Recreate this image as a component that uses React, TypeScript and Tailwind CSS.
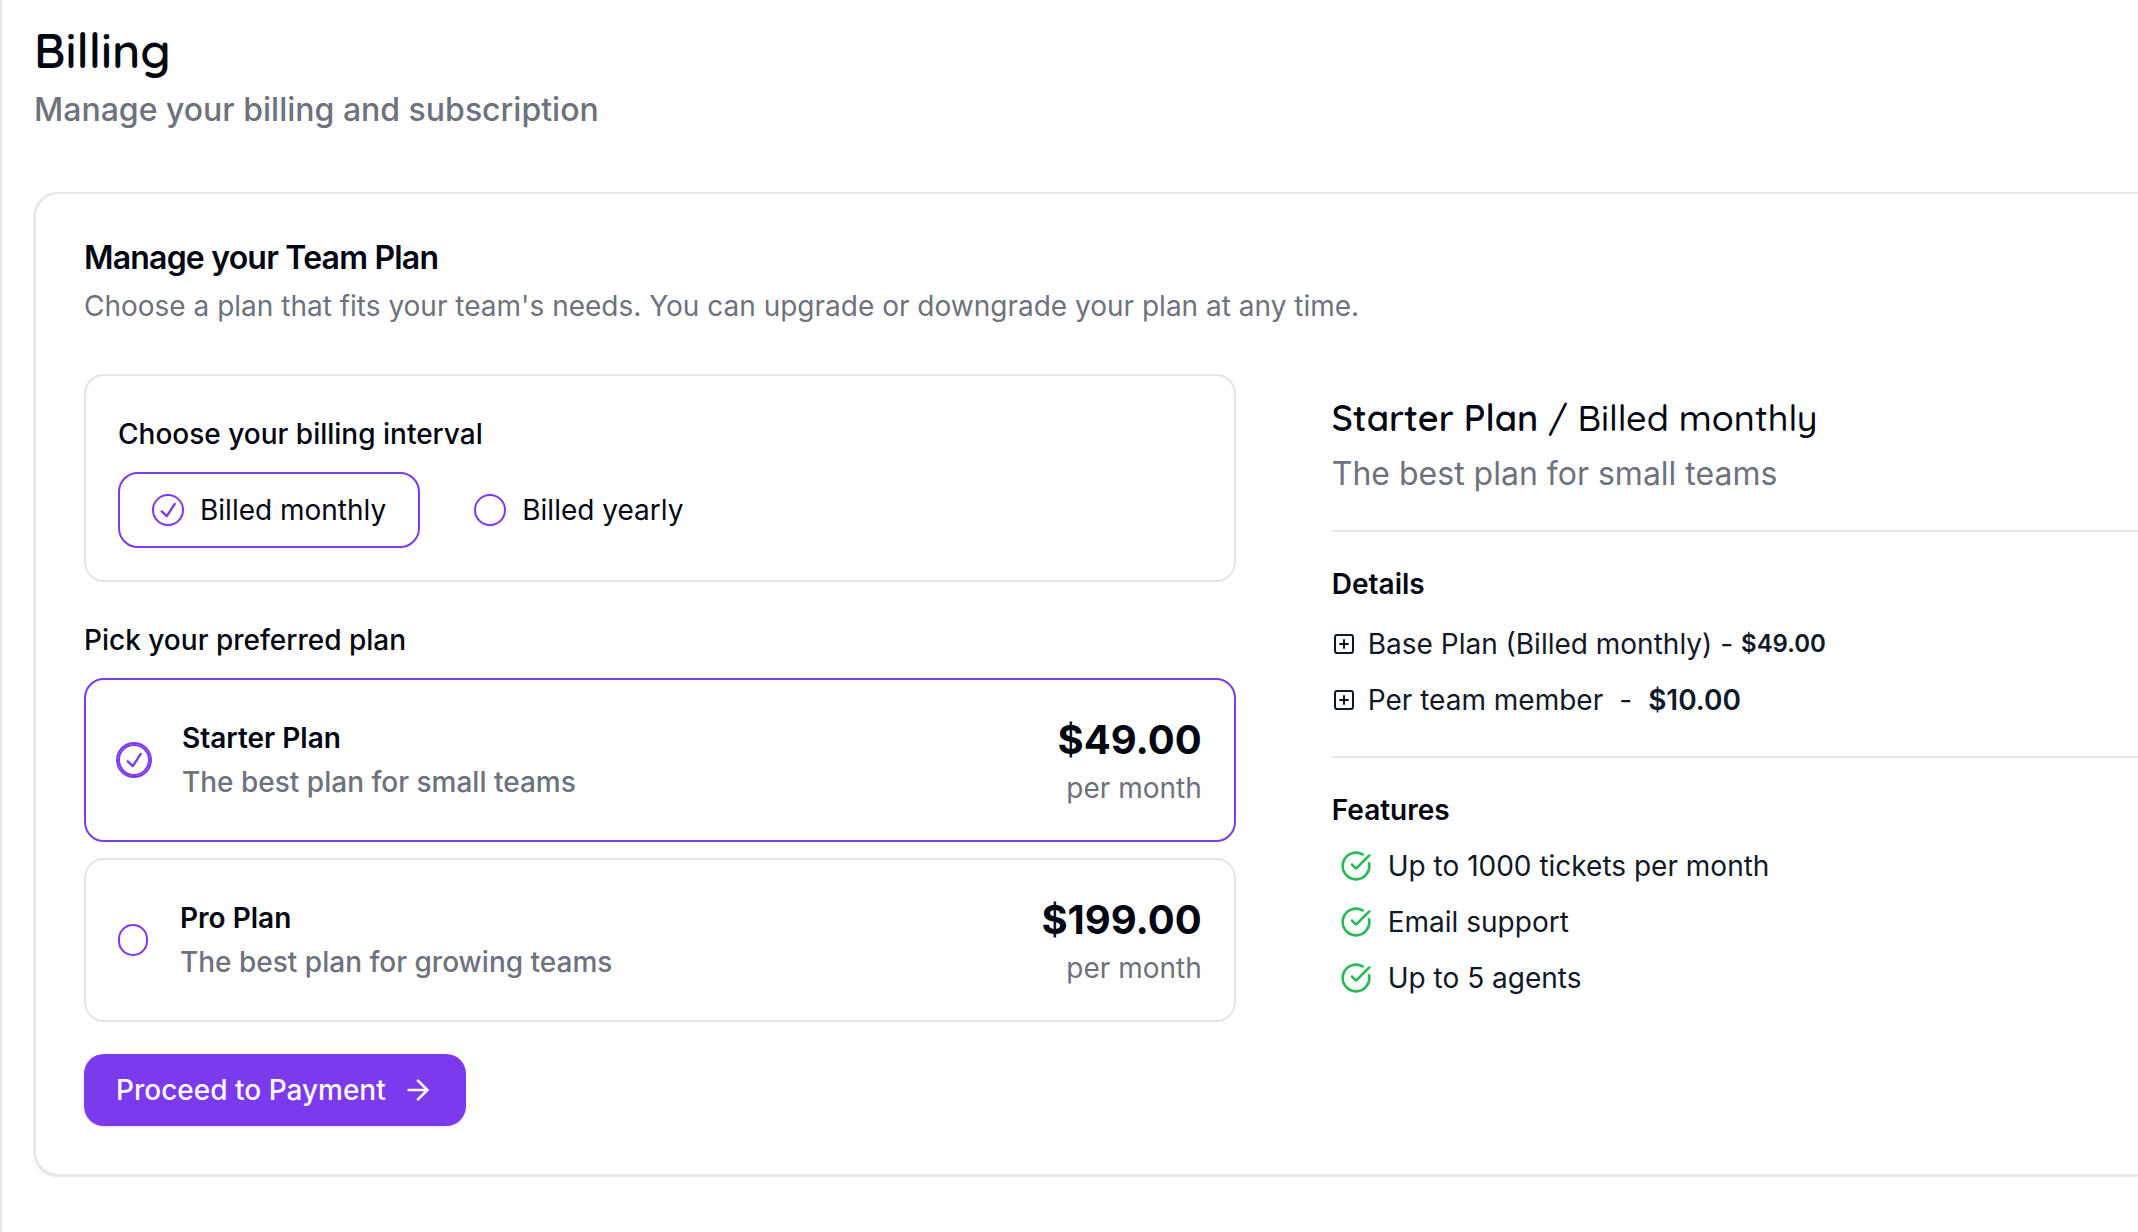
import { ArrowRight, CircleCheckBig, SquarePlus } from "lucide-react";
import { RxCheck } from "react-icons/rx";
import clsx from "clsx";
import { useState } from "react";

type Interval = "month" | "year";

const intervals: { id: Interval; label: string }[] = [
    { id: "month", label: "Billed monthly" },
    { id: "year", label: "Billed yearly" },
];

const plans = [
    {
        id: "starter",
        name: "Starter Plan",
        description: "The best plan for small teams",
        price: { month: "$49.00", year: "$490.00" },
        perMember: "$10.00",
        features: ["Up to 1000 tickets per month", "Email support", "Up to 5 agents"],
    },
    {
        id: "pro",
        name: "Pro Plan",
        description: "The best plan for growing teams",
        price: { month: "$199.00", year: "$1990.00" },
        perMember: "$10.00",
        features: ["Unlimited tickets", "Priority support", "Up to 20 agents"],
    },
];

interface RadioProps {
    name: string;
    value: string;
    checked: boolean;
    ring?: boolean;
    onChange: () => void;
}

function Radio({ name, value, checked, ring, onChange }: RadioProps) {
    return (
        <span className={clsx("relative flex h-8 items-center justify-center", ring && !checked ? "w-[30px]" : "w-8")}>
            <input
                type="radio"
                name={name}
                value={value}
                checked={checked}
                onChange={onChange}
                className={clsx(
                    "h-full w-full appearance-none rounded-full border-2 border-[#7c3aed] shadow-sm",
                    ring && checked && "ring-2 ring-[#7c3aed]",
                )}
            />
            {checked && <RxCheck className="pointer-events-none absolute h-7 w-7 text-[#7c3aed]" />}
        </span>
    );
}

export default function App() {
    const [interval, setBillingInterval] = useState<Interval>("month");
    const [planId, setPlanId] = useState("starter");

    const plan = plans.find((p) => p.id === planId) ?? plans[0];
    const intervalLabel = intervals.find((i) => i.id === interval)?.label;

    return (
        <main className="min-h-screen overflow-hidden border-l-2 border-[#e5e5e5] bg-white pt-5.5 pl-8 font-['Inter',sans-serif] text-[28px] leading-10 text-[#030712]">
            <h1 className="font-['Quicksand','Inter',sans-serif] text-5xl leading-14 font-semibold">Billing</h1>
            <p className="mt-2.5 text-[32px] leading-11 font-medium text-[#6e727c]">Manage your billing and subscription</p>

            <section className="mt-15 rounded-l-3xl border-2 border-r-0 border-[#e5e5e5] py-12 pl-12 shadow-sm">
                <h2 className="text-[32px] leading-8 font-semibold tracking-tight">Manage your Team Plan</h2>
                <p className="mt-3 text-[#6e727c]">Choose a plan that fits your team's needs. You can upgrade or downgrade your plan at any time.</p>

                <div className="mt-12 grid grid-cols-[10fr_7fr] gap-24">
                    <form onSubmit={(e) => e.preventDefault()}>
                        <fieldset className="rounded-[20px] border-2 border-[#e5e5e5] p-8">
                            <div className="pt-1 leading-11 font-medium">Choose your billing interval</div>
                            <div className="mt-4 flex gap-5">
                                {intervals.map((item) => (
                                    <label
                                        key={item.id}
                                        className={clsx(
                                            "flex items-center gap-4 rounded-[20px] border-2 px-8 py-4",
                                            item.id === interval ? "border-[#7c3aed]" : "border-transparent",
                                        )}
                                    >
                                        <Radio
                                            name="interval"
                                            value={item.id}
                                            checked={item.id === interval}
                                            onChange={() => setBillingInterval(item.id)}
                                        />
                                        {item.label}
                                    </label>
                                ))}
                            </div>
                        </fieldset>

                        <div className="mt-9.5 font-medium">Pick your preferred plan</div>
                        <div className="mt-4.5 space-y-4">
                            {plans.map((item) => (
                                <label
                                    key={item.id}
                                    className={clsx(
                                        "flex h-41 items-center gap-8 rounded-[20px] border-2 px-8",
                                        item.id === planId ? "border-[#7c3aed]" : "border-[#e5e5e5]",
                                    )}
                                >
                                    <Radio
                                        ring
                                        name="plan"
                                        value={item.id}
                                        checked={item.id === planId}
                                        onChange={() => setPlanId(item.id)}
                                    />
                                    <span className="flex flex-1 flex-col leading-11">
                                        <span className="font-semibold">{item.name}</span>
                                        <span className="font-medium text-[#6e727c]">{item.description}</span>
                                    </span>
                                    <span className="flex flex-col pt-2 text-right leading-12">
                                        <span className="text-[40px] font-bold">{item.price[interval]}</span>
                                        <span className="text-[#6e727c]">per {interval}</span>
                                    </span>
                                </label>
                            ))}
                        </div>

                        <button
                            type="submit"
                            className="mt-8 flex h-18 items-center gap-4 rounded-[20px] bg-[#7c3aed] px-8 font-medium text-[#f9fafb] shadow"
                        >
                            Proceed to Payment
                            <ArrowRight className="h-8 w-8" />
                        </button>
                    </form>

                    <aside className="pt-5">
                        <h3 className="font-['Quicksand','Inter',sans-serif] text-[36px] leading-12 font-medium">
                            <span className="font-semibold">{plan.name}</span> / {intervalLabel}
                        </h3>
                        <p className="mt-2 text-[32px] leading-12 text-[#6e727c]">{plan.description}</p>
                        <hr className="my-8 border-t-2 border-[#e5e5e5]" />
                        <h4 className="font-semibold">Details</h4>
                        <ul className="mt-5 space-y-4 text-[#111827]">
                            <li className="flex items-center gap-3">
                                <SquarePlus className="h-6 w-6" />
                                <span className="flex items-center gap-2">
                                    <span>Base Plan ({intervalLabel}) -</span>
                                    <span className="text-2xl font-semibold">{plan.price[interval]}</span>
                                </span>
                            </li>
                            <li className="flex items-center gap-3">
                                <SquarePlus className="h-6 w-6" />
                                <span className="flex gap-4">
                                    <span>Per team member</span>
                                    <span>-</span>
                                    <span className="font-semibold">{plan.perMember}</span>
                                </span>
                            </li>
                        </ul>
                        <hr className="mt-9 mb-8 border-t-2 border-[#e5e5e5]" />
                        <h4 className="font-semibold">Features</h4>
                        <ul className="mt-4 space-y-4 pl-2 text-[#111827]">
                            {plan.features.map((feature) => (
                                <li key={feature} className="flex items-center gap-4">
                                    <CircleCheckBig className="h-8 w-8 text-[#28bb57]" />
                                    {feature}
                                </li>
                            ))}
                        </ul>
                    </aside>
                </div>
            </section>
        </main>
    );
}
